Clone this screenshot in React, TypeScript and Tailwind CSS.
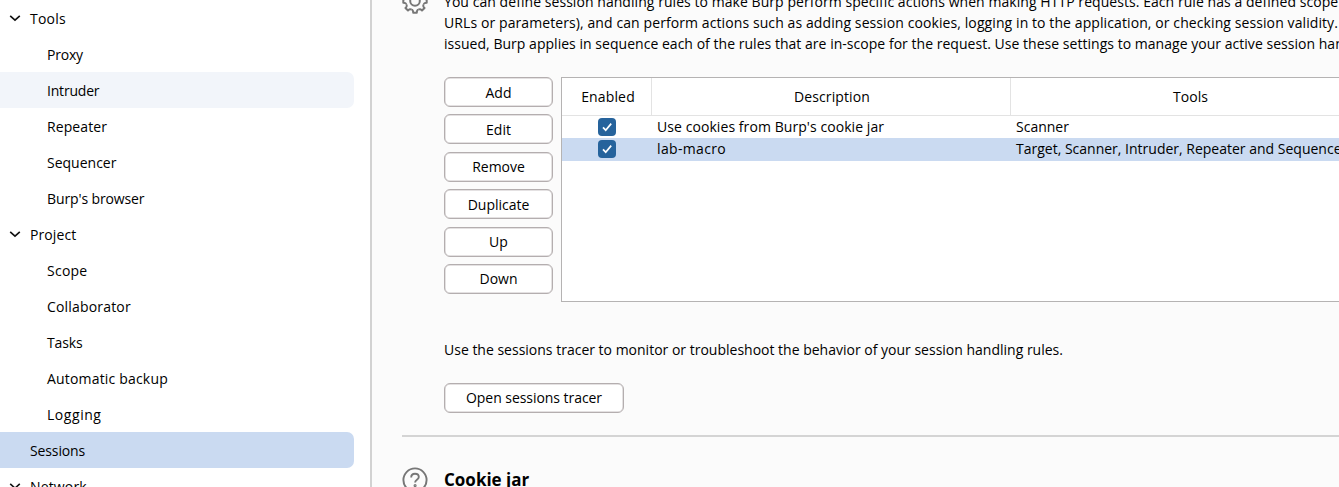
import React from "react";

type NavItem = { label: string; kind: "group" | "child" | "leaf"; state?: "hover" | "selected"; tracking?: string };

const navItems: NavItem[] = [
  { label: "Tools", kind: "group", tracking: "tracking-[0.2px]" },
  { label: "Proxy", kind: "child", tracking: "tracking-[-0.2px]" },
  { label: "Intruder", kind: "child", state: "hover", tracking: "tracking-[-0.2px]" },
  { label: "Repeater", kind: "child", tracking: "tracking-[0.1px]" },
  { label: "Sequencer", kind: "child" },
  { label: "Burp's browser", kind: "child", tracking: "tracking-[-0.12px]" },
  { label: "Project", kind: "group", tracking: "tracking-[0.1px]" },
  { label: "Scope", kind: "child", tracking: "tracking-[0.25px]" },
  { label: "Collaborator", kind: "child", tracking: "tracking-[0.18px]" },
  { label: "Tasks", kind: "child", tracking: "tracking-[-0.1px]" },
  { label: "Automatic backup", kind: "child", tracking: "tracking-[0.18px]" },
  { label: "Logging", kind: "child", tracking: "tracking-[0.55px]" },
  { label: "Sessions", kind: "leaf", state: "selected", tracking: "tracking-[-0.12px]" },
  { label: "Network", kind: "group", tracking: "tracking-[0.15px]" },
];

function Chevron() {
  return (
    <svg className="ml-[9px] mr-[9px] h-[12px] w-[12px] shrink-0" viewBox="0 0 12 12" fill="none" stroke="#111" strokeWidth="1.6">
      <path d="M1.2 3.8 L6 8.2 L10.8 3.8" />
    </svg>
  );
}

function NavRow({ item }: { item: NavItem }) {
  const bg =
    item.state === "hover" ? "bg-[#f2f5fa]" : item.state === "selected" ? "bg-[#cadaf1]" : "";
  const pad = item.kind === "child" ? "pl-[47px]" : item.kind === "leaf" ? "pl-[30px]" : "";
  return (
    <div className={`flex h-9 w-[354px] shrink-0 items-center rounded-r-[7px] ${bg} ${pad}`}>
      {item.kind === "group" && <Chevron />}
      <span className={item.tracking}>{item.label}</span>
    </div>
  );
}

function Button({ children, className = "" }: { children: React.ReactNode; className?: string }) {
  return (
    <button
      className={`flex h-[30px] items-center justify-center rounded-[6px] border border-[#b4aeaf] bg-white shadow-[inset_0_0_0_0.5px_#c9c4c5] ${className}`}
    >
      {children}
    </button>
  );
}

function Check() {
  return (
    <svg className="h-[18px] w-[18px]" viewBox="0 0 18 18">
      <rect width="18" height="18" rx="4" fill="#26639c" />
      <path d="M5 9.4 L7.7 12.2 L13.2 5.6" fill="none" stroke="#fff" strokeWidth="1.7" />
    </svg>
  );
}

const gearTeeth = [0, 45, 90, 135, 180, 225, 270, 315];

function Gear() {
  return (
    <svg className="h-[26px] w-[26px]" viewBox="0 0 26 26" fill="none" stroke="#777" strokeWidth="2" strokeLinejoin="round">
      {gearTeeth.map((angle) => (
        <path key={angle} transform={`rotate(${angle} 13 13)`} d="M9.4 4.2 Q11.2 4.3 11.2 1.3 H14.8 Q14.8 4.3 16.6 4.2" />
      ))}
      <circle cx="13" cy="13" r="4.8" />
    </svg>
  );
}

function Help() {
  return (
    <svg className="h-[26px] w-[26px]" viewBox="0 0 26 26" fill="none" stroke="#777" strokeWidth="1.9">
      <circle cx="13" cy="13" r="11.6" />
      <path d="M9.2 10.4c0-2.2 1.6-3.6 3.8-3.6s3.8 1.3 3.8 3.3c0 2.7-3.7 2.7-3.7 5.4" />
      <circle cx="13.1" cy="18.6" r="0.6" />
    </svg>
  );
}

export default function App() {
  return (
    <div className="flex h-[487px] w-[1339px] overflow-hidden bg-[#fbfbfb] font-['Open_Sans','Noto_Sans',sans-serif] text-[14px] leading-[21px] text-black">
      <nav className="flex w-[372px] shrink-0 flex-col overflow-hidden border-r-2 border-[#d2d2d2] bg-white">
        {navItems.map((item) => (
          <NavRow key={item.label} item={item} />
        ))}
      </nav>

      <main className="flex min-w-0 flex-1 flex-col overflow-hidden pl-[30px]">
        <section className="flex h-[435px] shrink-0">
          <div className="-mt-[12px] w-[42px] shrink-0">
            <Gear />
          </div>
          <div className="flex min-w-0 flex-1 flex-col">
            <div className="-mt-[9px] shrink-0 whitespace-nowrap">
              <p className="tracking-[0.055px]">You can define session handling rules to make Burp perform specific actions when making HTTP requests. Each rule has a defined scope</p>
              <p className="tracking-[0.093px]">URLs or parameters), and can perform actions such as adding session cookies, logging in to the application, or checking session validity.</p>
              <p className="tracking-[0.03px]">issued, Burp applies in sequence each of the rules that are in-scope for the request. Use these settings to manage your active session han</p>
            </div>
            <div className="mt-[23px] flex h-[225px] shrink-0">
              <div className="flex h-[217px] w-[109px] shrink-0 flex-col justify-between">
                <Button>Add</Button>
                <Button>Edit</Button>
                <Button>Remove</Button>
                <Button>Duplicate</Button>
                <Button>Up</Button>
                <Button>Down</Button>
              </div>
              <div className="ml-[8px] flex w-[860px] shrink-0 flex-col border border-[#b5b3b3] bg-white">
                <div className="flex h-[38px] shrink-0 items-center border-b border-[#e3e3e3]">
                  <div className="flex h-full w-[90px] items-center justify-center border-r border-[#e3e3e3] pl-[3px] tracking-[0.15px]">Enabled</div>
                  <div className="flex h-full w-[359px] items-center justify-center border-r border-[#e3e3e3] pl-[2px] tracking-[0.1px]">Description</div>
                  <div className="flex w-[359px] justify-center">Tools</div>
                </div>
                <div className="flex h-[22px] shrink-0 items-center whitespace-nowrap">
                  <div className="flex w-[90px] justify-center"><Check /></div>
                  <div className="-mt-[2px] w-[359px] pl-[5px] tracking-[0.07px]">Use cookies from Burp's cookie jar</div>
                  <div className="-mt-[2px] pl-[5px]">Scanner</div>
                </div>
                <div className="flex h-[23px] shrink-0 items-center whitespace-nowrap bg-[#cadaf1]">
                  <div className="-mt-[1px] flex w-[90px] justify-center"><Check /></div>
                  <div className="-mt-[2px] w-[359px] pl-[5px] tracking-[0.35px]">lab-macro</div>
                  <div className="-mt-[2px] pl-[5px]">Target, Scanner, Intruder, Repeater and Sequencer</div>
                </div>
              </div>
            </div>
            <p className="mt-[37px]">Use the sessions tracer to monitor or troubleshoot the behavior of your session handling rules.</p>
            <Button className="mt-[23px] w-[180px] shrink-0 pb-[2px]"><span className="tracking-[-0.05px]">Open sessions tracer</span></Button>
          </div>
        </section>
        <section className="flex h-[80px] shrink-0 border-t-2 border-[#d4d4d4]">
          <div className="w-[42px] shrink-0 pt-[30px]">
            <Help />
          </div>
          <h2 className="pt-[32px] text-[17px] font-bold leading-[22px]">Cookie jar</h2>
        </section>
      </main>
    </div>
  );
}
